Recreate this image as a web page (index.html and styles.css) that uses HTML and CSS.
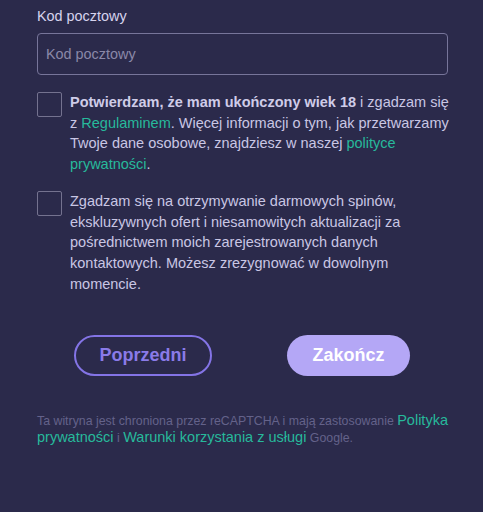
FILE: index.html
```html
<!DOCTYPE html>
<html lang="pl">
<head>
<meta charset="utf-8">
<link rel="stylesheet" href="styles.css">
</head>
<body>
<div class="form">
  <label class="label" for="zip">Kod pocztowy</label>
  <input class="input" id="zip" type="text" placeholder="Kod pocztowy">

  <div class="check first">
    <span class="box"></span>
    <p class="check-text"><b>Potwierdzam, że mam ukończony wiek 18</b> i zgadzam się z <a href="#">Regulaminem</a>. Więcej informacji o tym, jak przetwarzamy Twoje dane osobowe, znajdziesz w naszej <a href="#">polityce prywatności</a>.</p>
  </div>

  <div class="check second">
    <span class="box"></span>
    <p class="check-text">Zgadzam się na otrzymywanie darmowych spinów, ekskluzywnych ofert i niesamowitych aktualizacji za pośrednictwem moich zarejestrowanych danych kontaktowych. Możesz zrezygnować w dowolnym momencie.</p>
  </div>

  <div class="buttons">
    <button class="btn btn-outline">Poprzedni</button>
    <button class="btn btn-fill">Zakończ</button>
  </div>

  <p class="footer">Ta witryna jest chroniona przez reCAPTCHA i mają zastosowanie <a href="#">Polityka prywatności</a> i <a href="#">Warunki korzystania z usługi</a> Google.</p>
</div>
</body>
</html>
```
FILE: styles.css
```css
html, body {
  margin: 0;
  padding: 0;
  background: #2b2a4b;
  height: 100%;
}
body {
  font-family: "Liberation Sans", Arial, sans-serif;
  color: #c9c6e4;
}
.form {
  display: flex;
  flex-direction: column;
  padding: 8px 35px 0 37px;
}
.label {
  font-size: 14.4px;
  line-height: 17px;
  color: #d6d3ee;
}
.input {
  margin-top: 8px;
  height: 42px;
  box-sizing: border-box;
  border: 1px solid #77759a;
  border-radius: 4px;
  background: transparent;
  padding: 0 8px;
  font-family: inherit;
  font-size: 14.4px;
  color: #c9c6e4;
  outline: none;
}
.input::placeholder {
  color: #8a88a8;
}
.check {
  display: flex;
  gap: 8px;
  align-items: flex-start;
  margin-right: -8px;
}
.check.first { margin-top: 17px; }
.check.second { margin-top: 16px; }
.box {
  flex: none;
  width: 23px;
  height: 23px;
  border: 1px solid #74728f;
  border-radius: 2px;
}
.check-text {
  margin: 0;
  font-size: 14.5px;
  line-height: 20.7px;
  color: #c9c6e4;
}
.check-text b {
  font-weight: bold;
  color: #cfcce8;
}
.check-text a, .footer a {
  color: #27b99b;
  text-decoration: none;
}
.buttons {
  display: flex;
  gap: 75px;
  margin-top: 41px;
  padding-left: 37px;
}
.btn {
  height: 41px;
  border-radius: 21px;
  font-family: inherit;
  font-size: 18px;
  font-weight: bold;
  box-sizing: border-box;
  cursor: pointer;
}
.btn-outline {
  width: 138px;
  background: transparent;
  border: 2px solid #8474e6;
  color: #8a7be8;
}
.btn-fill {
  width: 123px;
  background: #b4a7f6;
  border: none;
  color: #ffffff;
}
.footer {
  margin: 37px -8px 0 0;
  font-size: 12.35px;
  line-height: 17px;
  color: #64628a;
}
.footer a {
  font-size: 14.5px;
  line-height: 14px;
}
```
